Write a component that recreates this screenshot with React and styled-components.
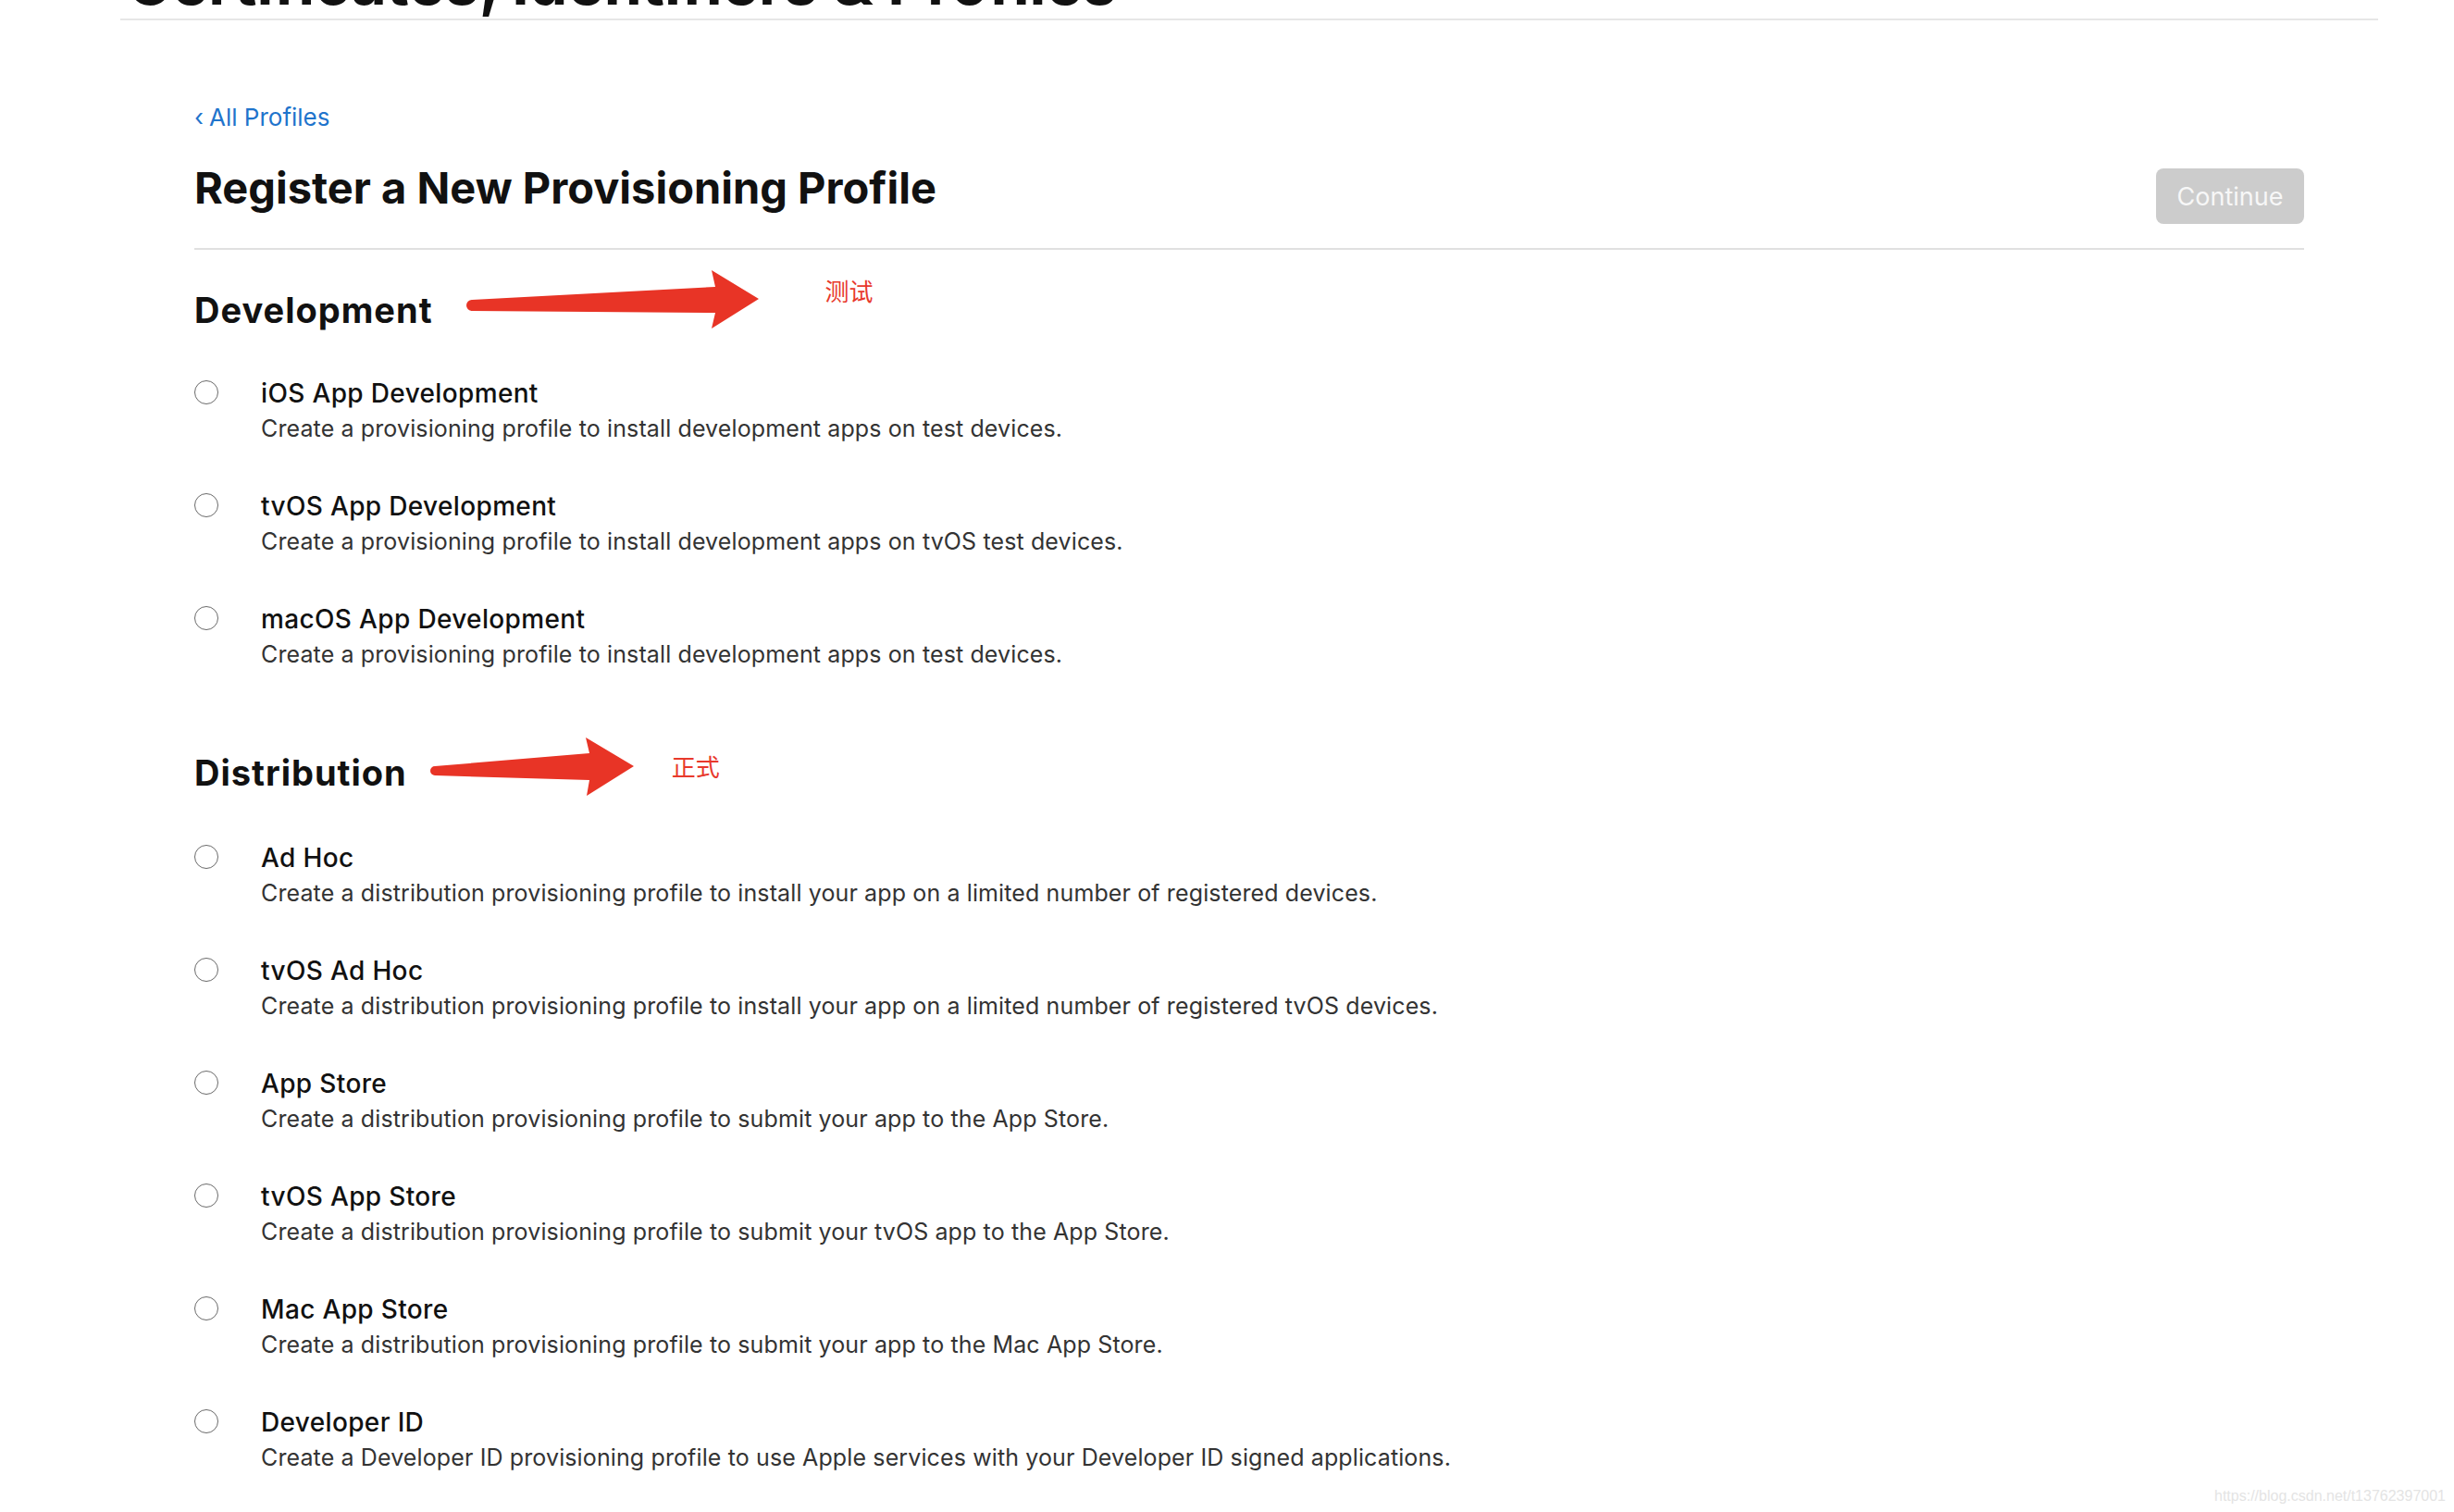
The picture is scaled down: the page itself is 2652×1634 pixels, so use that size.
import React from "react";
import styled, { createGlobalStyle } from "styled-components";

const GlobalStyle = createGlobalStyle`
    html, body {
        margin: 0;
        padding: 0;
        background: #ffffff;
    }

    body {
        font-family: Inter, "Noto Sans", "Liberation Sans", sans-serif;
        color: #111111;
        -webkit-font-smoothing: antialiased;
    }
`;

const Page = styled.div`
    position: relative;
    min-height: 100vh;
    overflow: hidden;
`;

const HeaderBar = styled.div`
    height: 20px;
    margin: 0 82px 0 130px;
    display: flex;
    align-items: flex-end;
    border-bottom: 2px solid #e6e6e6;
`;

const HeaderTitle = styled.h1`
    margin: 0 0 6px 7px;
    font-size: 66px;
    line-height: 66px;
    font-weight: 700;
    white-space: nowrap;
    color: #111111;
`;

const Main = styled.main`
    width: 2280px;
    margin-left: 210px;
    padding-top: 89px;
`;

const BackLink = styled.a`
    display: block;
    font-size: 26px;
    line-height: 32px;
    color: #1f74cc;
    text-decoration: none;
    cursor: pointer;

    span {
        margin-right: 6px;
    }
`;

const TitleRow = styled.div`
    display: flex;
    justify-content: space-between;
    align-items: flex-start;
    padding: 32px 0 26px;
    border-bottom: 2px solid #e0e0e0;
`;

const PageTitle = styled.h2`
    margin: 0;
    font-size: 47px;
    line-height: 56px;
    font-weight: 700;
    color: #111111;
`;

const ContinueButton = styled.button`
    margin-top: 7px;
    width: 160px;
    height: 60px;
    border: none;
    border-radius: 8px;
    background: #cccccc;
    color: #f7f7f7;
    font-family: inherit;
    font-size: 27px;
    cursor: default;
`;

const Section = styled.section`
    margin-top: ${(props) => props.top}px;
`;

const SectionHead = styled.div`
    display: flex;
    align-items: flex-start;
    height: 46px;
`;

const SectionTitle = styled.h3`
    margin: 0;
    font-size: 38px;
    line-height: 46px;
    font-weight: 700;
    letter-spacing: 1px;
    color: #111111;
`;

const Arrow = styled.svg`
    flex: none;
    margin-left: ${(props) => props.gap}px;
    margin-top: ${(props) => props.lift}px;
`;

const Note = styled.span`
    margin-left: ${(props) => props.gap}px;
    margin-top: ${(props) => props.lift}px;
    font-family: "Noto Sans CJK SC", sans-serif;
    font-size: 26px;
    line-height: 28px;
    font-weight: 400;
    color: #e8392c;
`;

const Options = styled.div`
    display: flex;
    flex-direction: column;
    gap: 50px;
    margin-top: ${(props) => props.top}px;
`;

const Option = styled.label`
    display: flex;
    align-items: flex-start;
    gap: 46px;
    cursor: pointer;
`;

const Radio = styled.span`
    flex: none;
    width: 26px;
    height: 26px;
    margin-top: 4px;
    box-sizing: border-box;
    border-radius: 50%;
    border: 1.8px solid #6a6a6a;
    background: #ffffff;
`;

const OptionText = styled.div`
    display: flex;
    flex-direction: column;
    gap: 4px;
`;

const OptionTitle = styled.div`
    font-size: 28px;
    line-height: 36px;
    font-weight: 500;
    letter-spacing: 0.35px;
    color: #111111;
`;

const OptionDesc = styled.div`
    font-size: 25px;
    line-height: 32px;
    font-weight: 400;
    letter-spacing: 0.12px;
    color: #333333;
`;

const Watermark = styled.div`
    position: absolute;
    right: 9px;
    bottom: 8px;
    font-family: "Liberation Sans", Arial, sans-serif;
    font-size: 16px;
    color: #e4e4e4;
`;

const development = [
    {
        title: "iOS App Development",
        desc: "Create a provisioning profile to install development apps on test devices.",
    },
    {
        title: "tvOS App Development",
        desc: "Create a provisioning profile to install development apps on tvOS test devices.",
    },
    {
        title: "macOS App Development",
        desc: "Create a provisioning profile to install development apps on test devices.",
    },
];

const distribution = [
    {
        title: "Ad Hoc",
        desc: "Create a distribution provisioning profile to install your app on a limited number of registered devices.",
    },
    {
        title: "tvOS Ad Hoc",
        desc: "Create a distribution provisioning profile to install your app on a limited number of registered tvOS devices.",
    },
    {
        title: "App Store",
        desc: "Create a distribution provisioning profile to submit your app to the App Store.",
    },
    {
        title: "tvOS App Store",
        desc: "Create a distribution provisioning profile to submit your tvOS app to the App Store.",
    },
    {
        title: "Mac App Store",
        desc: "Create a distribution provisioning profile to submit your app to the Mac App Store.",
    },
    {
        title: "Developer ID",
        desc: "Create a Developer ID provisioning profile to use Apple services with your Developer ID signed applications.",
    },
];

function OptionList({ items, top }) {
    return (
        <Options top={top}>
            {items.map((item) => (
                <Option key={item.title}>
                    <Radio />
                    <OptionText>
                        <OptionTitle>{item.title}</OptionTitle>
                        <OptionDesc>{item.desc}</OptionDesc>
                    </OptionText>
                </Option>
            ))}
        </Options>
    );
}

// hand-drawn red annotation arrows from the screenshot
function BigArrow({ gap, lift }) {
    return (
        <Arrow width="318" height="64" viewBox="0 0 318 64" gap={gap} lift={lift}>
            <path
                d="M6 32 L269 18 L265 0 L316 31 L265 63 L269 46 L6 44 A6 6 0 0 1 6 32 Z"
                fill="#e83426"
            />
        </Arrow>
    );
}

function SmallArrow({ gap, lift }) {
    return (
        <Arrow width="221" height="64" viewBox="0 0 221 64" gap={gap} lift={lift}>
            <path
                d="M5 31 L172 17 L168 0 L220 31 L169 63 L172 46 L5 41 A5 5 0 0 1 5 31 Z"
                fill="#e83426"
            />
        </Arrow>
    );
}

export default function App() {
    return (
        <Page>
            <GlobalStyle />
            <HeaderBar>
                <HeaderTitle>Certificates, Identifiers &amp; Profiles</HeaderTitle>
            </HeaderBar>
            <Main>
                <BackLink>
                    <span>‹</span>All Profiles
                </BackLink>
                <TitleRow>
                    <PageTitle>Register a New Provisioning Profile</PageTitle>
                    <ContinueButton disabled>Continue</ContinueButton>
                </TitleRow>

                <Section top={42}>
                    <SectionHead>
                        <SectionTitle>Development</SectionTitle>
                        <BigArrow gap={36} lift={-20} />
                        <Note gap={70} lift={-12}>测试</Note>
                    </SectionHead>
                    <OptionList items={development} top={49} />
                </Section>

                <Section top={89}>
                    <SectionHead>
                        <SectionTitle>Distribution</SectionTitle>
                        <SmallArrow gap={25} lift={-15} />
                        <Note gap={40} lift={2}>正式</Note>
                    </SectionHead>
                    <OptionList items={distribution} top={51} />
                </Section>
            </Main>
            <Watermark>https://blog.csdn.net/t13762397001</Watermark>
        </Page>
    );
}
